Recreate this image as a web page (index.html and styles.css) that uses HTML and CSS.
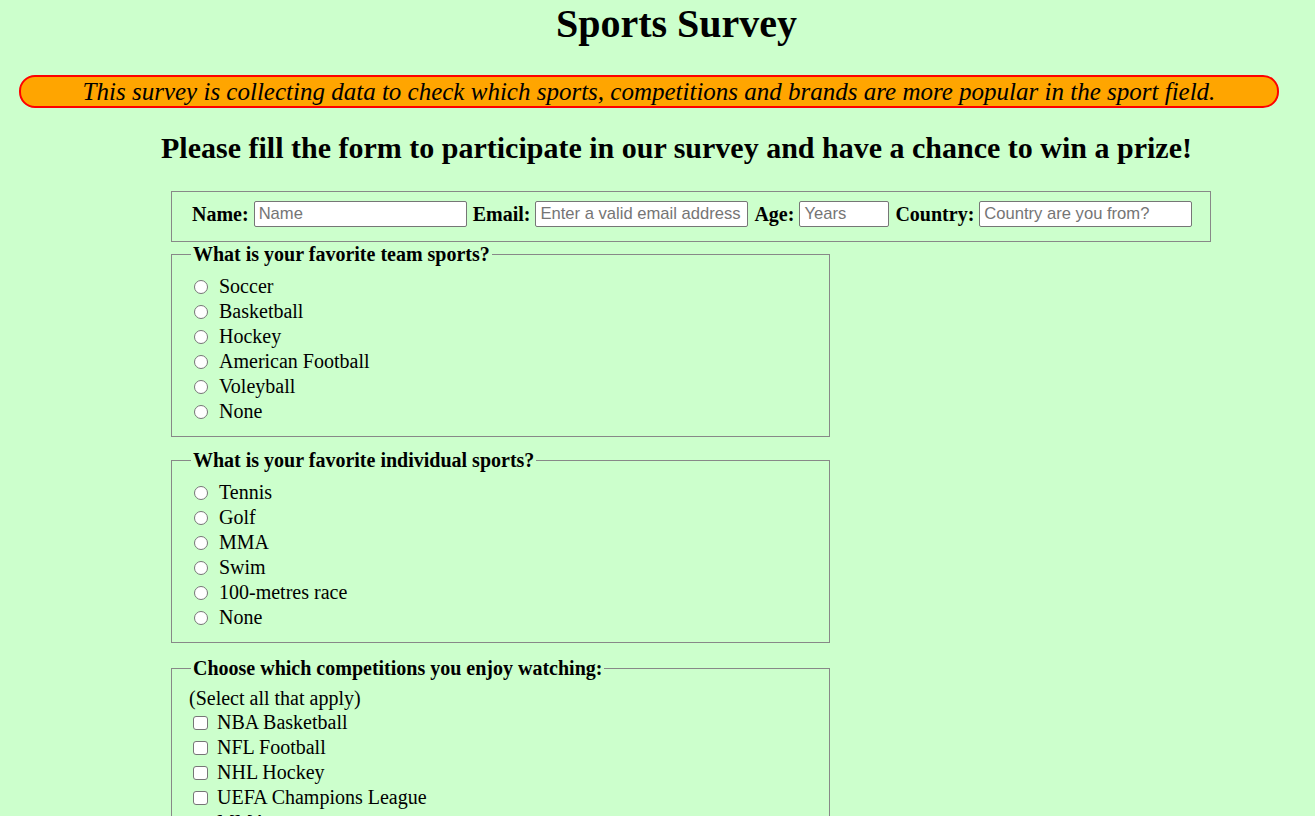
FILE: index.html
```html
<!DOCTYPE html>
<html>
<head>
<meta charset="utf-8">
<title>Sports Survey</title>
<link rel="stylesheet" href="styles.css">
</head>
<body>
<header class="head">
  <h1 class="title">Sports Survey</h1>
  <p class="banner">This survey is collecting data to check which sports, competitions and brands are more popular in the sport field.</p>
  <h2 class="subtitle">Please fill the form to participate in our survey and have a chance to win a prize!</h2>
</header>
<form class="survey">
  <fieldset class="info">
    <label class="lbl">Name:</label><input class="txt" type="text" placeholder="Name">
    <label class="lbl">Email:</label><input class="txt" type="email" placeholder="Enter a valid email address">
    <label class="lbl">Age:</label><input class="txt age" type="number" placeholder="Years">
    <label class="lbl">Country:</label><input class="txt" type="text" placeholder="Country are you from?">
  </fieldset>
  <fieldset class="group">
    <legend>What is your favorite team sports?</legend>
    <label class="opt"><input type="radio" name="team">Soccer</label>
    <label class="opt"><input type="radio" name="team">Basketball</label>
    <label class="opt"><input type="radio" name="team">Hockey</label>
    <label class="opt"><input type="radio" name="team">American Football</label>
    <label class="opt"><input type="radio" name="team">Voleyball</label>
    <label class="opt"><input type="radio" name="team">None</label>
  </fieldset>
  <fieldset class="group">
    <legend>What is your favorite individual sports?</legend>
    <label class="opt"><input type="radio" name="ind">Tennis</label>
    <label class="opt"><input type="radio" name="ind">Golf</label>
    <label class="opt"><input type="radio" name="ind">MMA</label>
    <label class="opt"><input type="radio" name="ind">Swim</label>
    <label class="opt"><input type="radio" name="ind">100-metres race</label>
    <label class="opt"><input type="radio" name="ind">None</label>
  </fieldset>
  <fieldset class="group multi">
    <legend>Choose which competitions you enjoy watching:</legend>
    <p class="hint">(Select all that apply)</p>
    <label class="opt chk"><input type="checkbox">NBA Basketball</label>
    <label class="opt chk"><input type="checkbox">NFL Football</label>
    <label class="opt chk"><input type="checkbox">NHL Hockey</label>
    <label class="opt chk"><input type="checkbox">UEFA Champions League</label>
    <label class="opt chk"><input type="checkbox">MMA</label>
    <label class="opt chk"><input type="checkbox">Formula 1</label>
  </fieldset>
</form>
</body>
</html>
```
FILE: styles.css
```css
html, body {
  margin: 0;
  padding: 0;
  background: #ccffcc;
  font-family: "Liberation Serif", "Times New Roman", serif;
  color: #000;
}
.head {
  display: flex;
  flex-direction: column;
  align-items: center;
}
.title {
  margin: 2px 0 0 38px;
  font-size: 40px;
  font-weight: bold;
  line-height: 44px;
}
.banner {
  align-self: flex-start;
  margin: 29px 0 0 19px;
  width: 1260px;
  box-sizing: border-box;
  height: 33px;
  background: orange;
  border: 2px solid red;
  border-radius: 16px;
  font-style: italic;
  font-size: 25px;
  text-align: center;
  line-height: 29px;
}
.subtitle {
  margin: 23px 0 0 38px;
  font-size: 30px;
  line-height: 33px;
}
.survey {
  margin: 27px 0 0 171px;
  width: 1040px;
}
.info {
  display: flex;
  align-items: center;
  margin: 0 0 1px;
  padding: 9px 10px 14px 20px;
  border: 1px solid #888;
  font-size: 20px;
}
.lbl {
  font-weight: bold;
  margin-right: 5px;
}
.txt {
  width: 213px;
  height: 26px;
  margin: 0 6px 0 0;
  box-sizing: border-box;
  font-family: "Liberation Sans", Arial, sans-serif;
  font-size: 16.6px;
  padding: 1px 4px;
  border: 1px solid #767676;
  border-radius: 2px;
  background: #fff;
}
.txt::placeholder {
  color: #757575;
}
.age {
  width: 90px;
}
.group {
  width: 659px;
  box-sizing: border-box;
  margin: 0 0 12px;
  padding: 8px 10px 12px 22px;
  border: 1px solid #888;
}
.group legend {
  font-weight: bold;
  font-size: 20px;
  line-height: 23px;
  padding: 0 2px;
  margin-left: -3px;
}
.opt {
  display: flex;
  align-items: center;
  font-size: 20px;
  line-height: 25px;
}
.opt input {
  appearance: none;
  -webkit-appearance: none;
  box-sizing: border-box;
  margin: 0 11px 0 0;
  width: 14px;
  height: 14px;
  flex: none;
  border: 1px solid #767676;
  border-radius: 50%;
  background: #fff;
}
.chk input {
  width: 15px;
  border-radius: 3px;
  margin-right: 9px;
}
.multi {
  margin-top: 14px;
  padding-top: 6px;
}
.multi .opt {
  margin-left: -1px;
}
.hint {
  margin: 0 0 0 -5px;
  font-size: 20px;
  line-height: 24px;
}
```
